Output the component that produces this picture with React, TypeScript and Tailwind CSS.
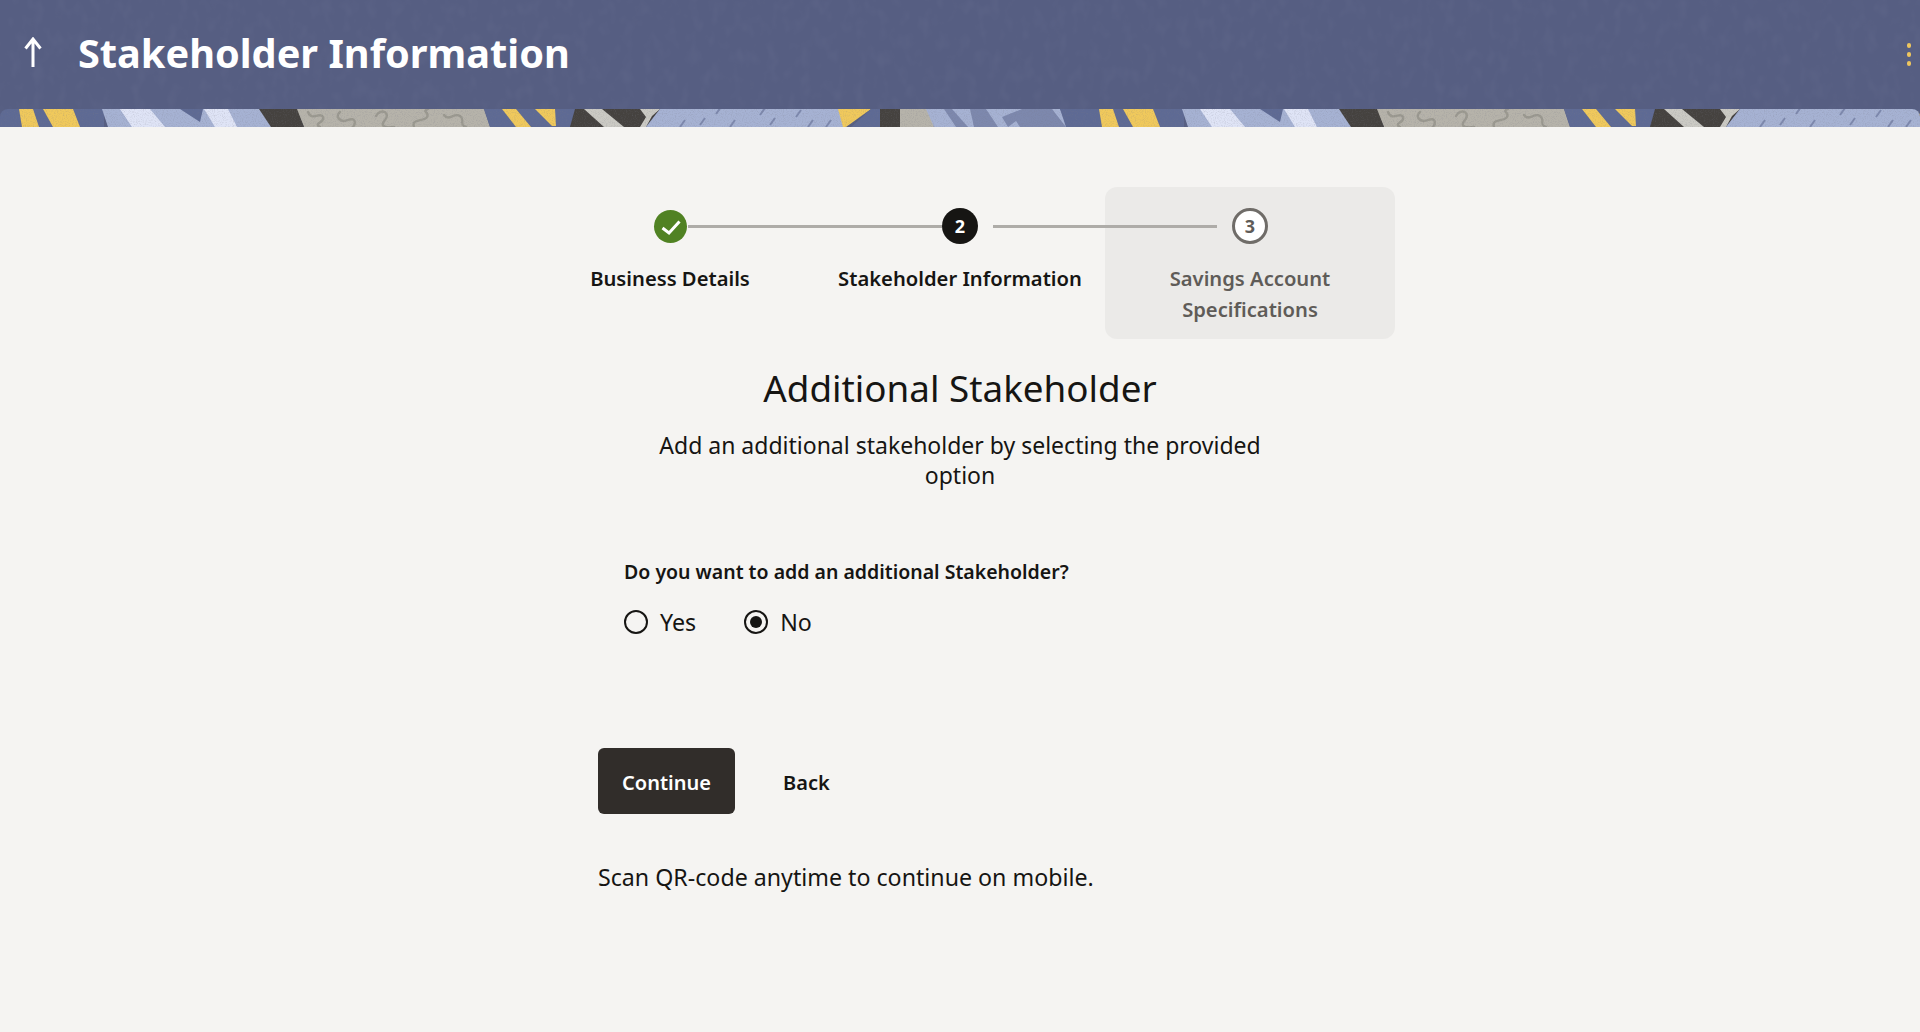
import React from "react";

const SLATE = "#5e6a94";
const PERI = "#a6b2d3";
const WHITE = "#dfe4f6";
const YELLOW = "#f0c95c";
const DARK = "#45423f";
const BEIGE = "#b6b3aa";
const LIGHT = "#cbcac4";
const DASH = "#7d88ad";
const SQUIG = "#9b9990";

function BandTile({ x }: { x: number }) {
  const polys: [string, string][] = [
    [SLATE, "0,0 104,0 104,18 0,18"],
    [YELLOW, "19,0 33,0 39,18 22,18"],
    [YELLOW, "43,0 73,0 80,18 53,18"],
    [PERI, "102,0 264,0 272,18 108,18"],
    [WHITE, "120,0 150,0 165,18 132,18"],
    [SLATE, "180,0 203,0 200,13"],
    [WHITE, "204,0 228,0 237,18 215,18"],
    [BEIGE, "296,0 484,0 490,18 304,18"],
    [DARK, "259,0 297,0 304,18 271,18"],
    [SLATE, "484,0 578,0 570,18 490,18"],
    [YELLOW, "502,0 516,0 531,18 516,18"],
    [YELLOW, "535,0 555,0 556,17 552,17"],
    [DARK, "575,0 660,0 646,18 570,18"],
    [LIGHT, "584,0 602,0 624,18 604,18"],
    [LIGHT, "640,0 660,0 652,7 646,18 640,18 646,8"],
    [PERI, "660,0 842,0 846,18 646,18"],
    [YELLOW, "838,0 871,0 846,18 843,18"],
    [SLATE, "871,0 880,0 880,18 851,18"],
    [DARK, "880,0 900,0 900,18 880,18"],
    [BEIGE, "900,0 930,0 934,18 900,18"],
    [PERI, "926,0 1060,0 1070,18 934,18"],
    [DASH, "944,0 952,0 968,18 956,18"],
    [DASH, "970,0 986,0 998,18 974,18"],
    [DASH, "1002,8 1022,0 1052,0 1066,18 1020,18 1016,12 1008,18"],
    [SLATE, "1060,0 1080,0 1080,18 1066,18"],
  ];
  const dashes: [number, number][] = [
    [680, 18], [700, 16], [716, 5], [730, 18], [760, 6], [770, 16], [796, 8], [808, 18], [826, 18],
  ];
  const squigs = [
    "M308 3c4 10 13 -1 15 5s-10 6 -3 10",
    "M340 3c-6 5 1 11 8 8s9 3 4 8",
    "M376 7c5 -9 15 -3 9 4s1 8 9 7",
    "M414 18c-3 -9 10 -5 13 -10s-6 -5 1 -8",
    "M444 6c5 7 10 -3 16 1s-2 8 6 11",
  ];
  return (
    <g transform={`translate(${x} 0)`}>
      {polys.map(([c, p], i) => (
        <polygon key={i} fill={c} points={p} />
      ))}
      {dashes.map(([dx, y], i) => (
        <path key={i} d={`M${dx} ${y}l5 -7`} stroke={DASH} strokeWidth={2} />
      ))}
      {squigs.map((d, i) => (
        <path key={i} d={d} fill="none" stroke={SQUIG} strokeWidth={2.4} strokeLinecap="round" />
      ))}
    </g>
  );
}

function Band() {
  return (
    <svg className="block w-full h-[18px]" viewBox="0 0 1920 18" preserveAspectRatio="none" aria-hidden>
      <defs>
        <filter id="speck" x="0" y="0" width="100%" height="100%">
          <feTurbulence type="fractalNoise" baseFrequency="0.9" numOctaves="2" seed="4" />
          <feColorMatrix values="0 0 0 0 0.2  0 0 0 0 0.2  0 0 0 0 0.25  0 0 0 1.6 -0.75" />
        </filter>
      </defs>
      <BandTile x={0} />
      <BandTile x={1080} />
      <rect width="1920" height="18" filter="url(#speck)" opacity="0.35" />
    </svg>
  );
}

function Texture() {
  return (
    <svg className="absolute inset-0 w-full h-full" aria-hidden>
      <defs>
        <filter id="swirl" x="0" y="0" width="100%" height="100%">
          <feTurbulence type="fractalNoise" baseFrequency="0.09 0.06" numOctaves="2" seed="9" />
          <feColorMatrix values="0 0 0 0 0.2  0 0 0 0 0.22  0 0 0 0 0.35  0 0 0 2.4 -1.1" />
        </filter>
      </defs>
      <rect width="100%" height="100%" filter="url(#swirl)" opacity="0.12" />
    </svg>
  );
}

function Step({
  state,
  label,
  num,
}: {
  state: "done" | "current" | "todo";
  label: string;
  num: number;
}) {
  return (
    <div
      className={`w-[290px] h-[152px] pt-[21px] rounded-xl flex flex-col items-stretch ${
        state === "todo" ? "bg-[#ebeae8]" : ""
      }`}
    >
      <div className="flex items-center h-9">
        <div className="flex-1 flex">
          {state !== "done" && (
            <div className={`h-[3px] flex-1 bg-[#aeaca8] ${state === "todo" ? "mr-[15px]" : ""}`} />
          )}
        </div>
        <div className="w-9 h-9 flex items-center justify-center">
          {state === "done" && (
            <div className="w-[33px] h-[33px] rounded-full bg-[#508223] flex items-center justify-center">
              <svg width="33" height="33" viewBox="0 0 33 33" fill="none">
                <path d="M8.5 18l6.5 5L25.5 11.5" stroke="#fff" strokeWidth="3" />
              </svg>
            </div>
          )}
          {state === "current" && (
            <div className="w-9 h-9 rounded-full bg-[#161513] text-white text-[18px] font-bold flex items-center justify-center">
              {num}
            </div>
          )}
          {state === "todo" && (
            <div className="w-9 h-9 rounded-full bg-white border-[3px] border-[#6f6c68] text-[#5f5c58] text-[18px] font-bold flex items-center justify-center">
              {num}
            </div>
          )}
        </div>
        <div className="flex-1 flex">
          {state !== "todo" && (
            <div className={`h-[3px] flex-1 bg-[#aeaca8] ${state === "current" ? "ml-[15px]" : ""}`} />
          )}
        </div>
      </div>
      <div
        className={`mt-[19px] text-center text-[20.2px] leading-[31px] font-semibold ${
          state === "todo" ? "text-[#5f5c58] px-10" : "text-[#161513] whitespace-nowrap"
        }`}
      >
        {label}
      </div>
    </div>
  );
}

function Radio({ label, checked }: { label: string; checked?: boolean }) {
  return (
    <div className="flex items-center gap-3 h-6">
      <div className="w-6 h-6 mb-[1px] rounded-full border-2 border-[#161513] flex items-center justify-center">
        {checked && <div className="w-3 h-3 rounded-full bg-[#161513]" />}
      </div>
      <span className="text-[23.2px] leading-[30px]">{label}</span>
    </div>
  );
}

export default function App() {
  return (
    <div className="min-h-[1032px] bg-[#f5f4f2] text-[#161513] font-['Noto_Sans',sans-serif]">
      <header className="relative bg-[#565e82]">
        <Texture />
        <div className="relative h-[109px] flex items-center">
          <svg width="20" height="30" viewBox="0 0 20 30" fill="none" className="ml-[23px] mb-[5px]">
            <path d="M10 30V2M2.5 11.5L10 2l7.5 9.5" stroke="#fff" strokeWidth="3" />
          </svg>
          <h1 className="ml-[35px] text-[39.7px] leading-[48px] font-bold text-white mb-[3px]">
            Stakeholder Information
          </h1>
          <div className="ml-auto mr-[9px] mb-[1px] flex flex-col gap-1">
            <span className="block w-1 h-[5px] rounded-sm bg-[#eec65e]" />
            <span className="block w-1 h-[5px] rounded-sm bg-[#eec65e]" />
            <span className="block w-1 h-[5px] rounded-sm bg-[#eec65e]" />
          </div>
        </div>
        <div className="relative rounded-t-lg overflow-hidden">
          <Band />
        </div>
      </header>

      <main className="pt-[60px] flex flex-col items-center">
        <div className="flex w-[870px]">
          <Step state="done" num={1} label="Business Details" />
          <Step state="current" num={2} label="Stakeholder Information" />
          <Step state="todo" num={3} label="Savings Account Specifications" />
        </div>

        <h2 className="mt-[25px] text-[36.8px] leading-[48px] font-normal text-center">Additional Stakeholder</h2>
        <p className="mt-[18px] w-[640px] text-[23px] leading-[30px] text-center">
          Add an additional stakeholder by selecting the provided option
        </p>

        <div className="mt-[67px] w-[724px]">
          <div className="pl-[26px]">
            <div className="text-[19.5px] leading-[30px] font-semibold">Do you want to add an additional Stakeholder?</div>
            <div className="mt-[23px] flex gap-12">
              <Radio label="Yes" />
              <Radio label="No" checked />
            </div>
          </div>

          <div className="mt-[114px] flex items-center gap-12">
            <button className="w-[137px] h-[66px] pt-[3px] rounded-md bg-[#312d2a] text-white text-[20px] font-semibold">
              Continue
            </button>
            <button className="pt-[3px] text-[20px] font-semibold">Back</button>
          </div>

          <p className="mt-[48px] text-[23.2px] leading-[30px]">Scan QR-code anytime to continue on mobile.</p>
        </div>
      </main>
    </div>
  );
}
